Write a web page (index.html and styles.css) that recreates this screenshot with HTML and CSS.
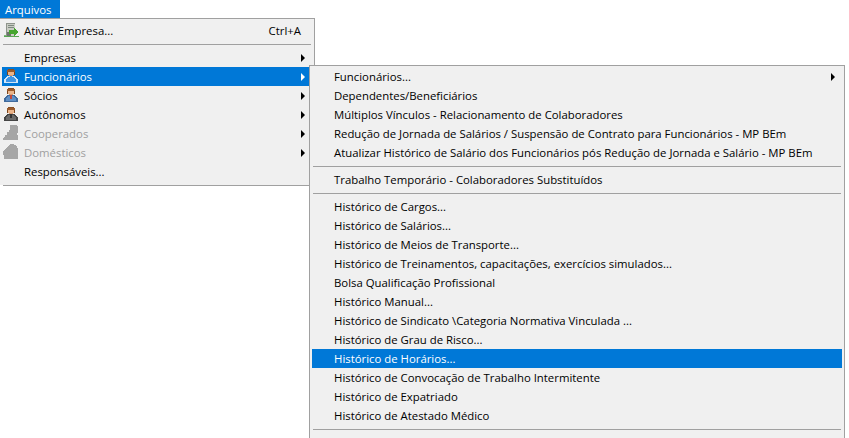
FILE: index.html
```html
<!DOCTYPE html>
<html lang="pt-BR">
<head>
<meta charset="utf-8">
<title>Arquivos</title>
<link rel="stylesheet" href="styles.css">
</head>
<body>
<svg class="defs" width="0" height="0" aria-hidden="true">
  <defs>
    <symbol id="person" viewBox="0 0 18 19" shape-rendering="crispEdges">
      <path fill="var(--outline)" d="M5 9h8v1h1v1h1v1h1v4H2v-4h1v-1h1v-1h1z"/>
      <path fill="var(--body)" d="M6 10h6v1h1v1h1v3H4v-3h1v-1h1z"/>
      <rect x="6" y="2" width="6" height="1" fill="#8a4f22"/>
      <rect x="5" y="3" width="8" height="2" fill="#9a5a2a"/>
      <rect x="5" y="5" width="1" height="3" fill="#7a451c"/>
      <rect x="12" y="5" width="1" height="3" fill="#7a451c"/>
      <rect x="6" y="5" width="6" height="3" fill="#eab48a"/>
      <rect x="7" y="8" width="4" height="1" fill="#d69a70"/>
      <rect x="8" y="9" width="2" height="4" fill="var(--tie)"/>
    </symbol>
    <symbol id="shade-a" viewBox="0 0 18 19" shape-rendering="crispEdges">
      <path fill="#a6a6a6" d="M8 1h7v1h1v7h-1v2h1v5H1v-2h1v-1h1v-2h2V8h2V6h1z"/>
    </symbol>
    <symbol id="shade-b" viewBox="0 0 18 19" shape-rendering="crispEdges">
      <path fill="#a6a6a6" d="M8 1h4v1h2v1h1v2h1v11H2v-4H1V8h1V7h1V6h1V5h1V4h1V3h1V2h1z"/>
    </symbol>
  </defs>
</svg>

<nav class="menubar"><span class="menubar-item">Arquivos</span></nav>

<div class="menu menu-main">
  <div class="row">
    <span class="icon">
      <svg class="glyph" width="18" height="19" viewBox="0 0 18 19" shape-rendering="crispEdges">
        <rect x="4" y="2" width="9" height="14" fill="#c9ccc4"/>
        <rect x="4" y="2" width="9" height="1" fill="#8f948c"/>
        <rect x="4" y="2" width="1" height="14" fill="#8f948c"/>
        <rect x="6" y="4" width="6" height="1" fill="#7f8a80"/>
        <rect x="6" y="6" width="6" height="1" fill="#7f8a80"/>
        <rect x="5" y="11" width="4" height="5" fill="#6d756d"/>
        <rect x="2" y="15" width="15" height="1" fill="#5aa655"/>
        <rect x="2" y="14" width="2" height="1" fill="#7bbf74"/>
        <path fill="#46a62f" d="M7 9h5V7h1v1h1v1h1v1h1v2h-1v1h-1v1h-1v1h-1v-2H7z"/>
      </svg>
    </span>
    <span class="label">Ativar Empresa...</span>
    <span class="shortcut">Ctrl+A</span>
  </div>
  <hr class="sep">
  <div class="row"><span class="icon"></span><span class="label">Empresas</span><span class="arrow"></span></div>
  <div class="row active"><span class="icon"><svg class="glyph p-bright" width="18" height="19"><use href="#person"/></svg></span><span class="label">Funcionários</span><span class="arrow"></span></div>
  <div class="row"><span class="icon"><svg class="glyph p-blue" width="18" height="19"><use href="#person"/></svg></span><span class="label">Sócios</span><span class="arrow"></span></div>
  <div class="row"><span class="icon"><svg class="glyph p-grey" width="18" height="19"><use href="#person"/></svg></span><span class="label">Autônomos</span><span class="arrow"></span></div>
  <div class="row disabled"><span class="icon"><svg class="glyph" width="18" height="19"><use href="#shade-a"/></svg></span><span class="label">Cooperados</span><span class="arrow"></span></div>
  <div class="row disabled"><span class="icon"><svg class="glyph" width="18" height="19"><use href="#shade-b"/></svg></span><span class="label">Domésticos</span><span class="arrow"></span></div>
  <div class="row"><span class="icon"></span><span class="label">Responsáveis...</span></div>
</div>

<div class="menu menu-sub">
  <div class="row"><span class="label">Funcionários...</span><span class="arrow"></span></div>
  <div class="row"><span class="label">Dependentes/Beneficiários</span></div>
  <div class="row"><span class="label">Múltiplos Vínculos - Relacionamento de Colaboradores</span></div>
  <div class="row"><span class="label">Redução de Jornada de Salários / Suspensão de Contrato para Funcionários - MP BEm</span></div>
  <div class="row"><span class="label">Atualizar Histórico de Salário dos Funcionários pós Redução de Jornada e Salário - MP BEm</span></div>
  <hr class="sep">
  <div class="row"><span class="label">Trabalho Temporário - Colaboradores Substituídos</span></div>
  <hr class="sep">
  <div class="row"><span class="label">Histórico de Cargos...</span></div>
  <div class="row"><span class="label">Histórico de Salários...</span></div>
  <div class="row"><span class="label">Histórico de Meios de Transporte...</span></div>
  <div class="row"><span class="label">Histórico de Treinamentos, capacitações, exercícios simulados...</span></div>
  <div class="row"><span class="label">Bolsa Qualificação Profissional</span></div>
  <div class="row"><span class="label">Histórico Manual...</span></div>
  <div class="row"><span class="label">Histórico de Sindicato \Categoria Normativa Vinculada ...</span></div>
  <div class="row"><span class="label">Histórico de Grau de Risco...</span></div>
  <div class="row active"><span class="label">Histórico de Horários...</span></div>
  <div class="row"><span class="label">Histórico de Convocação de Trabalho Intermitente</span></div>
  <div class="row"><span class="label">Histórico de Expatriado</span></div>
  <div class="row"><span class="label">Histórico de Atestado Médico</span></div>
  <hr class="sep">
</div>
</body>
</html>
```
FILE: styles.css
```css
html, body {
  margin: 0;
  padding: 0;
  height: 438px;
  overflow: hidden;
  background: #fff;
  font-family: "Open Sans", "Noto Sans", sans-serif;
  font-size: 11.36px;
  color: #000;
}
.defs { position: absolute; }
.menubar { display: flex; height: 18px; }
.menubar-item {
  display: flex;
  align-items: center;
  width: 60px;
  padding-left: 5px;
  box-sizing: border-box;
  background: #0078d7;
  color: #fff;
}
.menu {
  position: absolute;
  box-sizing: border-box;
  display: flex;
  flex-direction: column;
  background: #f0f0f0;
  border: 1px solid #a0a0a0;
  padding: 2px 2px 0;
}
.menu-main { left: 0; top: 18px; width: 315px; height: 168px; border-left: 0; }
.menu-main::after {
  content: "";
  position: absolute;
  left: 0;
  bottom: -1px;
  width: 3px;
  height: 1px;
  background: #fff;
}
.menu-sub { left: 309px; top: 65px; width: 536px; height: 373px; padding-top: 1px; border-bottom: 0; }
.row {
  display: flex;
  align-items: center;
  height: 19px;
  flex: none;
  white-space: nowrap;
}
.menu-sub .row { padding-left: 22px; }
.icon {
  display: flex;
  align-items: center;
  width: 22px;
  flex: none;
}
.glyph { display: block; }
.label { flex: 1; }
.shortcut { padding-right: 11px; }
.arrow {
  width: 0;
  height: 0;
  margin-right: 7px;
  border-style: solid;
  border-width: 4px 0 4px 4px;
  border-color: transparent transparent transparent #000;
}
.sep {
  flex: none;
  width: auto;
  height: 1px;
  margin: 4px 1px 3px;
  border: 0;
  background: #a0a0a0;
}
.active { background: #0078d7; color: #fff; }
.active .arrow { border-left-color: #fff; }
.disabled { color: #a0a0a0; }
.p-bright { --body: #3f96e6; --outline: #d4e6f6; --tie: #3f96e6; }
.p-blue { --body: #5f8fc5; --outline: #3f6a9c; --tie: #c0483c; }
.p-grey { --body: #6a6a6a; --outline: #454545; --tie: #333; }
```
